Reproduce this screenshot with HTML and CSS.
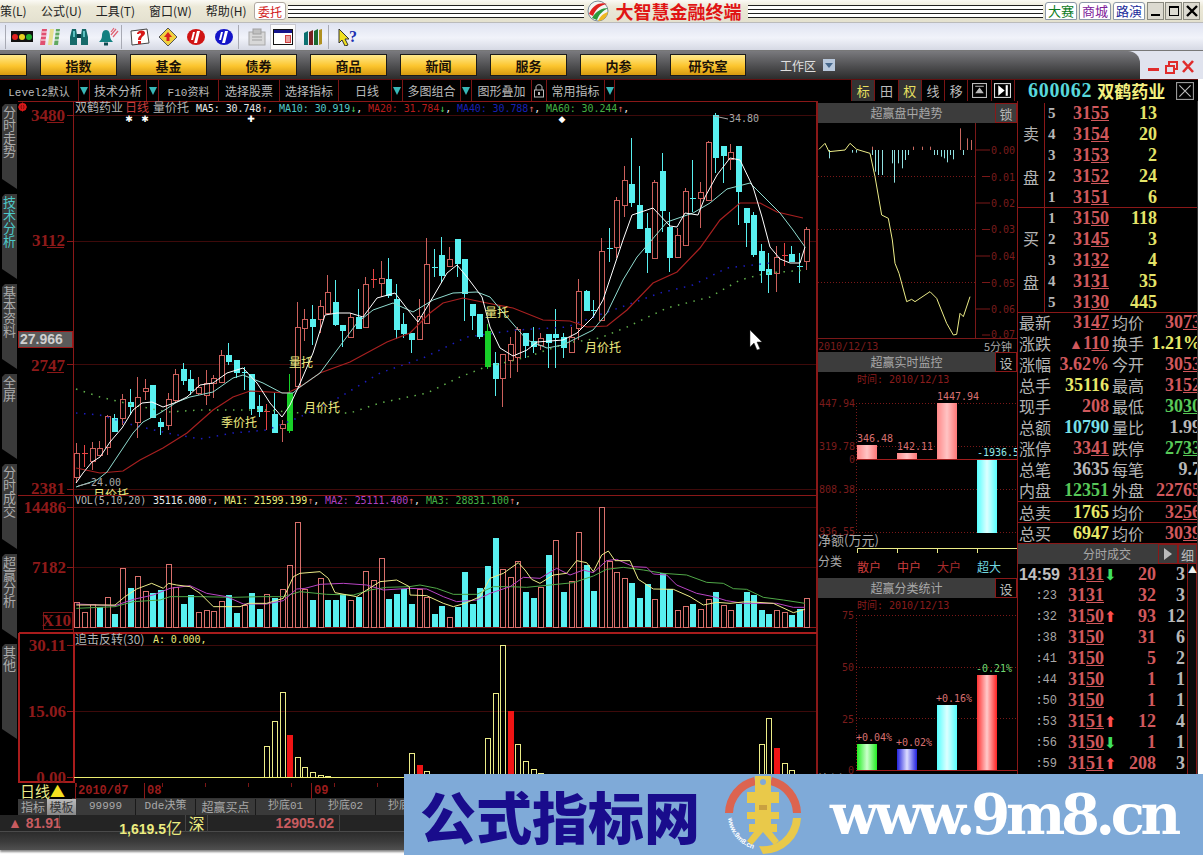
FILE: index.html
```html
<!DOCTYPE html>
<html lang="zh-CN">
<head>
    <meta charset="UTF-8">
    <title>大智慧金融终端</title>
    <link rel="stylesheet" href="styles.css">
</head>
<body>
    <svg class="defs" width="0" height="0">
        <defs>
            <linearGradient id="gradRed"><stop offset="0" stop-color="#ff6f6f"/><stop offset=".5" stop-color="#ffd8d8"/><stop offset="1" stop-color="#f55"/></linearGradient>
            <linearGradient id="gradPink"><stop offset="0" stop-color="#f88"/><stop offset=".5" stop-color="#ffc4c4"/><stop offset="1" stop-color="#f77"/></linearGradient>
            <linearGradient id="gradDeep"><stop offset="0" stop-color="#f33"/><stop offset=".5" stop-color="#ffcaca"/><stop offset="1" stop-color="#f22"/></linearGradient>
            <linearGradient id="gradCyan"><stop offset="0" stop-color="#5ff"/><stop offset=".5" stop-color="#dff"/><stop offset="1" stop-color="#5ff"/></linearGradient>
            <linearGradient id="gradGreen"><stop offset="0" stop-color="#2e2"/><stop offset=".5" stop-color="#cfc"/><stop offset="1" stop-color="#2e2"/></linearGradient>
            <linearGradient id="gradBlue"><stop offset="0" stop-color="#22d"/><stop offset=".5" stop-color="#ddf"/><stop offset="1" stop-color="#22d"/></linearGradient>
            <clipPath id="mainClip"><rect x="74" y="102" width="742" height="393"/></clipPath>
        </defs>
    </svg>

    <div class="titlebar">
        <div class="menu">
            <span class="menu-first">策(L)</span>
            <span>公式(U)</span>
            <span>工具(T)</span>
            <span>窗口(W)</span>
            <span>帮助(H)</span>
        </div>
        <div class="entrust">委托</div>
        <div class="stripes"></div>
        <svg class="app-logo" viewBox="0 0 24 24" width="24" height="24">
            <circle cx="12" cy="12" r="10" fill="#f4f4f4" stroke="#7a8a98"/>
            <path d="M3 15C7 5 15 3 21 5C15 6 10 9 7 17Z" fill="#e02020"/>
            <path d="M6 19C10 12 16 9 22 9C17 12 13 15 11 21Z" fill="#2c9a3c"/>
            <path d="M12 22C14 17 18 14 22 13C21 18 17 22 12 22Z" fill="#f0b820"/>
        </svg>
        <div class="app-title">大智慧金融终端</div>
        <div class="stripes"></div>
        <div class="link-btn link-green">大赛</div>
        <div class="link-btn link-purple">商城</div>
        <div class="link-btn link-blue">路演</div>
        <div class="sys-btns">
            <span class="sys-btn"><svg viewBox="0 0 14 14" width="14" height="14"><rect x="2" y="10" width="9" height="2"/></svg></span>
            <span class="sys-btn"><svg viewBox="0 0 14 14" width="14" height="14"><path d="M2 2h10v10h-10zM3 4v7h8v-7z" fill-rule="evenodd"/></svg></span>
            <span class="sys-btn"><svg viewBox="0 0 14 14" width="14" height="14"><path d="M2 2l10 10M12 2l-10 10" stroke="#000" stroke-width="2.4"/></svg></span>
        </div>
    </div>

    <div class="toolbar">
        <span class="tool-sep sep-a"></span>
        <svg class="tool ic-traffic" viewBox="0 0 22 14" width="22" height="14"><rect width="22" height="11" y="1" fill="#111"/><circle cx="4" cy="7" r="3" fill="#e02020"/><circle cx="11" cy="7" r="3" fill="#e8d020"/><circle cx="18" cy="7" r="3" fill="#20b030"/></svg>
        <svg class="tool ic-stripes" viewBox="0 0 22 18" width="22" height="18"><path d="M1 17l2-16h5l-2 16z" fill="#e05070"/><path d="M9 17l2-16h4l-2 16z" fill="#e8e090"/><path d="M15 17l2-16h4l-2 16z" fill="#60a860"/><path d="M3 4h5M2 8h5M2 12h5M16 4h5M16 8h5M15 12h5" stroke="#fff"/></svg>
        <svg class="tool ic-binoc" viewBox="0 0 20 20" width="20" height="20"><path d="M3 2h4l1 6v10h-7v-8zM17 2h-4l-1 6v10h7v-8z" fill="#156a6a"/><rect x="8" y="7" width="4" height="4" fill="#0c3c44"/><path d="M4 4h2v6h-2zM14 4h2v6h-2z" fill="#5cc0c0"/></svg>
        <svg class="tool ic-bell" viewBox="0 0 22 20" width="22" height="20"><path d="M9 3c3 0 4 3 4 6c0 3 2 5 3 6h-14c1-1 3-3 3-6c0-3 1-6 4-6z" fill="#128080"/><rect x="7" y="15.500" width="4" height="3" fill="#0c4a50"/><path d="M14 8l5-6M16 10l5-6M14 5l3-4" stroke="#e06070" stroke-width="1.200"/></svg>
        <span class="tool-sep sep-b"></span>
        <svg class="tool ic-help" viewBox="0 0 20 18" width="20" height="18"><path d="M1 3l16-2l2 14l-17 2z" fill="#fff" stroke="#444"/><path d="M7 6c0-4 8-5 8-1c0 3-4 3-4 7h-3c0-4 3-4 3-6c0-1-2-1-2 0z" fill="#d81818"/><rect x="8" y="13" width="3" height="3" fill="#d81818"/></svg>
        <svg class="tool ic-diamond" viewBox="0 0 20 20" width="20" height="20"><path d="M10 1l9 9l-9 9l-9-9z" fill="#f0d040" stroke="#555"/><path d="M10 5l4 5h-2.500v4h-3v-4h-2.500z" fill="#d82020"/></svg>
        <svg class="tool ic-round" viewBox="0 0 20 18" width="20" height="18"><ellipse cx="10" cy="9" rx="9" ry="8" fill="#d01414"/><path d="M8 15l3-12h3l-3 12zM5 12l2-8h2l-2 8z" fill="#fff"/></svg>
        <svg class="tool ic-round" viewBox="0 0 20 18" width="20" height="18"><ellipse cx="10" cy="9" rx="9" ry="8" fill="#1414c8"/><path d="M8 15l3-12h3l-3 12zM5 12l2-8h2l-2 8z" fill="#fff"/></svg>
        <span class="tool-sep sep-c"></span>
        <svg class="tool ic-clip" viewBox="0 0 18 18" width="18" height="18"><rect x="1" y="4" width="16" height="13" fill="#d8d8d8" stroke="#a8a8a8"/><rect x="5" y="1" width="8" height="5" fill="#c0c0c0" stroke="#a0a0a0"/><path d="M4 9h10M4 12h10" stroke="#a0a0a0"/></svg>
        <span class="tool-pressed"><svg viewBox="0 0 20 16" width="20" height="16"><rect x=".5" y=".5" width="19" height="15" fill="#fff" stroke="#111"/><rect x="1" y="1" width="18" height="3" fill="#14148c"/><rect x="12" y="6" width="6" height="8" fill="#d04040"/><path d="M13 8h4M13 10h4M13 12h4" stroke="#fff"/></svg></span>
        <svg class="tool ic-books" viewBox="0 0 20 18" width="20" height="18"><path d="M1 5l4-2v14h-4z" fill="#0c7070"/><path d="M6 4l4-2v15h-4z" fill="#7a2020"/><path d="M11 3l4-2v16h-4z" fill="#1a6a30"/><path d="M16 2l3-1v15l-3 1z" fill="#b09020"/></svg>
        <span class="tool-sep sep-d"></span>
        <span class="help-arrow"><svg viewBox="0 0 12 18" width="12" height="18"><path d="M1 1l10 10h-4l3 6l-3 1l-3-6l-3 3z" fill="#f0e020" stroke="#333"/></svg><span class="help-mark">?</span></span>
    </div>

    <div class="navwrap">
        <div class="navbar">
            <span class="nav-btn nav-cut"></span>
            <span class="nav-btn">指数</span>
            <span class="nav-btn">基金</span>
            <span class="nav-btn">债券</span>
            <span class="nav-btn">商品</span>
            <span class="nav-btn">新闻</span>
            <span class="nav-btn">服务</span>
            <span class="nav-btn">内参</span>
            <span class="nav-btn">研究室</span>
            <span class="workspace-label">工作区</span>
            <svg class="workspace-icon" viewBox="0 0 12 12" width="12" height="12"><rect width="12" height="12" fill="#b8c8dc"/><path d="M2 4l4 5l4-5z" fill="#47688c"/></svg>
        </div>
        <div class="mdi-btns">
            <svg viewBox="0 0 46 16" width="46" height="16"><rect x="0" y="9" width="11" height="3" fill="#e02c2c"/><path d="M18 7h8v7h-8zM21 7v-4h8v7h-3" fill="none" stroke="#e02c2c" stroke-width="2"/><path d="M35 2l10 11M45 2l-10 11" stroke="#e02c2c" stroke-width="2.600"/></svg>
        </div>
    </div>

    <div class="tabrow">
        <div class="tabs-left">
            <span class="tab tab-mono">Level2默认</span>
            <span class="tab tab-arrow"></span>
            <span class="tab">技术分析</span>
            <span class="tab tab-arrow"></span>
            <span class="tab tab-mono">F10资料</span>
            <span class="tab">选择股票</span>
            <span class="tab">选择指标</span>
            <span class="tab tab-wide">日线</span>
            <span class="tab tab-arrow"></span>
            <span class="tab">多图组合</span>
            <span class="tab tab-arrow"></span>
            <span class="tab">图形叠加</span>
            <span class="tab tab-lock"><svg viewBox="0 0 10 14" width="10" height="14"><path d="M2 6v-3c0-3 6-3 6 0v3" fill="none" stroke="#bbb"/><rect x=".5" y="6" width="9" height="7" fill="none" stroke="#bbb"/><rect x="4" y="8" width="2" height="3" fill="#bbb"/></svg></span>
            <span class="tab">常用指标</span>
            <span class="tab tab-arrow"></span>
        </div>
        <div class="tabs-fill"></div>
        <div class="tool-tabs">
            <span class="tool-tab tool-tab-on">标</span>
            <span class="tool-tab">田</span>
            <span class="tool-tab tool-tab-on">权</span>
            <span class="tool-tab">线</span>
            <span class="tool-tab">移</span>
            <span class="tool-tab"><svg viewBox="0 0 14 14" width="15" height="15"><rect x=".5" y=".5" width="13" height="13" fill="none" stroke="#bbb"/><path d="M3 3h8M7 5l3 4h-6z" stroke="#bbb" fill="#bbb"/></svg></span>
            <span class="tool-tab"><svg viewBox="0 0 16 14" width="17" height="15"><rect x=".5" y=".5" width="15" height="13" fill="none" stroke="#ddd"/><path d="M4 2l6 5l-6 5z" fill="#fff"/><rect x="11" y="2" width="2" height="10" fill="#fff"/></svg></span>
        </div>
        <div class="stock-head">
            <span class="stock-code">600062</span>
            <span class="stock-name">双鹤药业</span>
            <span class="stock-close"><svg viewBox="0 0 16 16" width="18" height="18"><rect x=".5" y=".5" width="15" height="15" fill="none" stroke="#999"/><path d="M3 3l10 10M13 3l-10 10" stroke="#bbb"/></svg></span>
        </div>
    </div>

    <div class="workspace">
        <div class="rail">
            <div class="rail-tab">分时走势</div>
            <div class="rail-tab rail-tab-on">技术分析</div>
            <div class="rail-tab">基本资料</div>
            <div class="rail-tab">全屏</div>
            <div class="rail-tab">分时成交</div>
            <div class="rail-tab">超赢分析</div>
            <div class="rail-tab rail-tab-last">其他</div>
        </div>

        <div class="chart-col">
            <svg class="kline" viewBox="18 101 799 682" width="799" height="682">
                <g class="grid">
                    <path d="M73 115.500H817M73 241.500H817M73 364.500H817M73 489.500H817M73 507.500H817M73 567.500H817M73 645.500H817M73 711.500H817"/>
                </g>
                <g class="frame">
                    <path d="M18 101.500H817M816.500 101V783M73.500 101V632M18 495.500H817M73 627.500H817M18 783.500H817"/>
                    <path class="frame-thick" d="M19 633H817M19 633V782H74V633"/>
                </g>
                <g class="ticks">
                    <path d="M67 115.500h6M67 241.500h6M67 364.500h6M67 489.500h6M67 507.500h6M67 567.500h6M67 645.500h6M67 711.500h6M67 777.500h6"/>
                    <path d="M47 122.500h17M47 247.500h17M47 372.500h17"/>
                </g>
                <g class="gear"><circle cx="22.500" cy="107" r="3"/><path d="M22.500 102.500v9M18 107h9M19.500 104l6 6M25.500 104l-6 6"/></g>

                <text class="axis-num" x="65" y="121">3480</text>
                <text class="axis-num" x="65" y="246">3112</text>
                <text class="axis-num" x="65" y="371">2747</text>
                <text class="axis-num" x="65" y="494">2381</text>
                <rect class="price-box" x="18.500" y="331.500" width="54" height="16"/>
                <text class="price-box-text" x="20" y="344">27.966</text>

                <g id="candles"></g>
                <g id="ma-lines"></g>

                <g class="legend">
                    <text class="cn-label" x="75" y="112">双鹤药业</text>
                    <text class="cn-label cn-red" x="125" y="112">日线</text>
                    <text class="cn-label" x="153" y="112">量价托</text>
                    <text class="mono-line" x="196" y="112"><tspan class="c-white">MA5: 30.748</tspan><tspan class="c-up">↑</tspan><tspan class="c-white">, </tspan><tspan class="c-cyan">MA10: 30.919</tspan><tspan class="c-down">↓</tspan><tspan class="c-white">, </tspan><tspan class="c-red">MA20: 31.784</tspan><tspan class="c-down">↓</tspan><tspan class="c-white">, </tspan><tspan class="c-blue">MA40: 30.788</tspan><tspan class="c-up">↑</tspan><tspan class="c-white">, </tspan><tspan class="c-green">MA60: 30.244</tspan><tspan class="c-up">↑</tspan><tspan class="c-white">,</tspan></text>
                    <text class="mark" x="129" y="122">✱</text>
                    <text class="mark" x="145" y="122">✱</text>
                    <text class="mark" x="251" y="122">✚</text>
                    <text class="mark" x="562" y="122">◆</text>
                </g>

                <g class="notes" clip-path="url(#mainClip)">
                    <text x="91" y="486" class="note-grey">24.00</text>
                    <text x="93" y="499">月价托</text>
                    <text x="221" y="427">季价托</text>
                    <text x="289" y="367">量托</text>
                    <text x="304" y="412">月价托</text>
                    <text x="485" y="317">量托</text>
                    <text x="585" y="352">月价托</text>
                    <text x="729" y="122" class="note-grey">34.80</text>
                    <path class="note-line" d="M714 116l14 3M78 486l12-3"/>
                </g>
                <path class="mouse" d="M750 330v17l4-4l3 7l3-1l-3-7h5z"/>

                <g class="legend">
                    <text class="mono-line c-grey" x="75" y="504">VOL(5,10,20)</text>
                    <text class="mono-line" x="153" y="504"><tspan class="c-white">35116.000</tspan><tspan class="c-up">↑</tspan><tspan class="c-white">, </tspan><tspan class="c-yellow">MA1: 21599.199</tspan><tspan class="c-up">↑</tspan><tspan class="c-white">, </tspan><tspan class="c-purple">MA2: 25111.400</tspan><tspan class="c-up">↑</tspan><tspan class="c-white">, </tspan><tspan class="c-green">MA3: 28831.100</tspan><tspan class="c-up">↑</tspan><tspan class="c-white">,</tspan></text>
                    <text class="cn-label" x="75" y="644">追击反转(30)</text>
                    <text class="mono-line c-yellow" x="153" y="643">A: 0.000,</text>
                </g>
                <text class="axis-num" x="66" y="513">14486</text>
                <text class="axis-num" x="66" y="573">7182</text>
                <rect class="x10-box" x="43.500" y="612.500" width="29" height="17"/>
                <text class="axis-num" x="71" y="626">X10</text>
                <text class="axis-num" x="66" y="651">30.11</text>
                <text class="axis-num" x="66" y="717">15.06</text>
                <text class="axis-num" x="66" y="783">0.00</text>

                <g id="volume"></g>
                <g id="signal"></g>
            </svg>

            <div class="time-axis">
                <span class="period">日线<span class="period-mark">▲</span></span>
                <span class="time-mark time-first">2010/07</span>
                <span class="time-mark time-second">08</span>
                <span class="time-mark time-third">09</span>
            </div>

            <div class="bottom-tabs">
                <span class="btm-tab btm-plain">指标</span>
                <span class="btm-tab btm-on">模板</span>
                <span class="btm-tab btm-num">99999</span>
                <span class="btm-tab btm-num">Dde决策</span>
                <span class="btm-tab btm-buy">超赢买点</span>
                <span class="btm-tab btm-num">抄底01</span>
                <span class="btm-tab btm-num">抄底02</span>
                <span class="btm-tab btm-num">抄底03</span>
            </div>
        </div>

        <div class="side">
            <div class="panel-title"><span class="panel-name">超赢盘中趋势</span><span class="panel-btn panel-btn-flat">锁</span></div>
            <svg class="trend" viewBox="818 123 199 229" width="199" height="229">
                <path class="dot-line" d="M818 176.500H975M818 229.500H975M818 282.500H975"/>
                <path class="axis-line" d="M975.500 123V339M818 338.500H1017"/>
                <path class="ticks-red" d="M976 150h14M982 176.500h8M976 203h14M982 229.500h8M976 256h14M982 282.500h8M976 309h14M982 335h8"/>
                <g id="trend-bars"></g>
                <polyline id="trend-line" class="line-yellow"/>
                <g class="trend-nums">
                    <text x="991" y="154">0.00</text>
                    <text x="991" y="181">0.01</text>
                    <text x="991" y="207">0.02</text>
                    <text x="991" y="233">0.03</text>
                    <text x="991" y="260">0.04</text>
                    <text x="991" y="287">0.05</text>
                    <text x="991" y="313">0.06</text>
                    <text x="991" y="338">0.07</text>
                </g>
                <text class="foot-date" x="818" y="350">2010/12/13</text>
                <text class="foot-period" x="984" y="351">5分钟</text>
            </svg>

            <div class="panel-title"><span class="panel-name">超赢实时监控</span><span class="panel-btn">设</span></div>
            <svg class="monitor" viewBox="818 372 199 206" width="199" height="206">
                <text class="panel-time" x="857" y="383">时间: 2010/12/13</text>
                <path class="dot-line" d="M856 403.500H1017M856 446.500H1017M856 489.500H1017M856 532.500H1017M856.500 403V532"/>
                <g class="bar-axis">
                    <text x="855" y="407">447.94</text>
                    <text x="855" y="450">319.78</text>
                    <text x="855" y="463">0</text>
                    <text x="855" y="493">808.38</text>
                    <text x="855" y="535">936.55</text>
                </g>
                <rect x="857" y="445" width="20" height="14" fill="url(#gradPink)"/>
                <rect x="897" y="453" width="20" height="6" fill="url(#gradPink)"/>
                <rect x="937" y="403" width="20" height="56" fill="url(#gradPink)"/>
                <rect x="977" y="460" width="20" height="73" fill="url(#gradCyan)"/>
                <path class="zero-line" d="M856 459.500H1017"/>
                <g class="bar-vals">
                    <text x="857" y="442">346.48</text>
                    <text x="897" y="450">142.11</text>
                    <text x="937" y="400">1447.94</text>
                    <text class="val-cyan" x="977" y="456">-1936.5</text>
                </g>
                <text class="panel-cn" x="818" y="545">净额(万元)</text>
                <path class="axis-yellow" d="M857.500 553V548.500H1017M897.500 553V548M937.500 553V548M977.500 553V548"/>
                <text class="panel-cn panel-cn-small" x="818" y="566">分类</text>
                <text class="class-red" x="857" y="572">散户</text>
                <text class="class-red" x="897" y="572">中户</text>
                <text class="class-dark" x="937" y="572">大户</text>
                <text class="class-cyan" x="977" y="572">超大</text>
            </svg>

            <div class="panel-title"><span class="panel-name">超赢分类统计</span><span class="panel-btn">设</span></div>
            <svg class="stats-chart" viewBox="818 598 199 217" width="199" height="217">
                <text class="panel-time" x="857" y="609">时间: 2010/12/13</text>
                <path class="dot-line" d="M856 615.500H1017M856 667.500H1017M856 718.500H1017M856.500 615V770"/>
                <g class="bar-axis">
                    <text x="854" y="619">75</text>
                    <text x="854" y="671">50</text>
                    <text x="854" y="723">25</text>
                    <text x="854" y="774">0</text>
                </g>
                <rect x="857" y="744" width="20" height="26" fill="url(#gradGreen)"/>
                <rect x="897" y="749" width="20" height="21" fill="url(#gradBlue)"/>
                <rect x="937" y="705" width="20" height="65" fill="url(#gradCyan)"/>
                <rect x="977" y="675" width="20" height="95" fill="url(#gradDeep)"/>
                <path class="zero-line" d="M856 770.500H1017"/>
                <g class="bar-vals">
                    <text x="856" y="741">+0.04%</text>
                    <text x="896" y="746">+0.02%</text>
                    <text x="936" y="702">+0.16%</text>
                    <text class="val-green" x="976" y="672">-0.21%</text>
                </g>
                <text class="panel-cn panel-cn-small" x="818" y="784">比例</text>
            </svg>
        </div>

        <div class="quote">
            <div class="book">
                <div class="book-side"><span>卖</span><span>盘</span></div>
                <div class="levels">
                    <div class="level"><span class="lv">5</span><span class="px">31<u>55</u></span><span class="qty">13</span></div>
                    <div class="level"><span class="lv">4</span><span class="px">31<u>54</u></span><span class="qty">20</span></div>
                    <div class="level"><span class="lv">3</span><span class="px">31<u>53</u></span><span class="qty">2</span></div>
                    <div class="level"><span class="lv">2</span><span class="px">31<u>52</u></span><span class="qty">24</span></div>
                    <div class="level"><span class="lv">1</span><span class="px">31<u>51</u></span><span class="qty">6</span></div>
                </div>
            </div>
            <div class="book">
                <div class="book-side"><span>买</span><span>盘</span></div>
                <div class="levels">
                    <div class="level"><span class="lv">1</span><span class="px">31<u>50</u></span><span class="qty">118</span></div>
                    <div class="level"><span class="lv">2</span><span class="px">31<u>45</u></span><span class="qty">3</span></div>
                    <div class="level"><span class="lv">3</span><span class="px">31<u>32</u></span><span class="qty">4</span></div>
                    <div class="level"><span class="lv">4</span><span class="px">31<u>31</u></span><span class="qty">35</span></div>
                    <div class="level"><span class="lv">5</span><span class="px">31<u>30</u></span><span class="qty">445</span></div>
                </div>
            </div>

            <div class="stats">
                <div class="stat"><span>最新</span><b class="red">31<u>47</u></b><span>均价</span><b class="red">30<u>73</u></b></div>
                <div class="stat"><span>涨跌</span><b class="red"><i class="tri">▲</i>1<u>10</u></b><span>换手</span><b class="yellow">1.21%</b></div>
                <div class="stat"><span>涨幅</span><b class="red">3.62%</b><span>今开</span><b class="red">30<u>53</u></b></div>
                <div class="stat"><span>总手</span><b class="yellow">35116</b><span>最高</span><b class="red">31<u>52</u></b></div>
                <div class="stat"><span>现手</span><b class="red">208</b><span>最低</span><b class="green">30<u>30</u></b></div>
                <div class="stat"><span>总额</span><b class="cyan">10790</b><span>量比</span><b class="grey">1.99</b></div>
                <div class="stat"><span>涨停</span><b class="red">33<u>41</u></b><span>跌停</span><b class="green">27<u>33</u></b></div>
                <div class="stat"><span>总笔</span><b class="grey">3635</b><span>每笔</span><b class="grey">9.7</b></div>
                <div class="stat"><span>内盘</span><b class="green">12351</b><span>外盘</span><b class="red">22765</b></div>
                <div class="stat stat-line"><span>总卖</span><b class="yellow">1765</b><span>均价</span><b class="red">32<u>56</u></b></div>
                <div class="stat stat-line"><span>总买</span><b class="yellow">6947</b><span>均价</span><b class="red">30<u>39</u></b></div>
            </div>

            <div class="panel-title trades-title"><span class="panel-name">分时成交</span><span class="panel-btn panel-play"><svg viewBox="0 0 10 12" width="10" height="12"><path d="M1 0l8 6l-8 6z" fill="#bbb"/></svg></span><span class="panel-btn panel-detail">细</span></div>
            <div class="trades-wrap">
                <div class="trades">
                    <div class="trade"><span class="t-first">14:59</span><b>31<u>31</u></b><i class="flag-down">⬇</i><b class="t-vol">20</b><b class="t-cnt">3</b></div>
                    <div class="trade"><span class="t-time">:23</span><b>31<u>31</u></b><i></i><b class="t-vol">32</b><b class="t-cnt">3</b></div>
                    <div class="trade"><span class="t-time">:32</span><b>31<u>50</u></b><i class="flag-up">⬆</i><b class="t-vol">93</b><b class="t-cnt">12</b></div>
                    <div class="trade"><span class="t-time">:38</span><b>31<u>50</u></b><i></i><b class="t-vol">31</b><b class="t-cnt">6</b></div>
                    <div class="trade"><span class="t-time">:41</span><b>31<u>50</u></b><i></i><b class="t-vol">5</b><b class="t-cnt">2</b></div>
                    <div class="trade"><span class="t-time">:44</span><b>31<u>50</u></b><i></i><b class="t-vol">1</b><b class="t-cnt">1</b></div>
                    <div class="trade"><span class="t-time">:50</span><b>31<u>50</u></b><i></i><b class="t-vol">1</b><b class="t-cnt">1</b></div>
                    <div class="trade"><span class="t-time">:53</span><b>31<u>51</u></b><i class="flag-up">⬆</i><b class="t-vol">12</b><b class="t-cnt">4</b></div>
                    <div class="trade"><span class="t-time">:56</span><b>31<u>50</u></b><i class="flag-down">⬇</i><b class="t-vol">1</b><b class="t-cnt">1</b></div>
                    <div class="trade"><span class="t-time">:59</span><b>31<u>51</u></b><i class="flag-up">⬆</i><b class="t-vol">208</b><b class="t-cnt">3</b></div>
                </div>
                <div class="scroll"><span class="scroll-up">▲</span></div>
            </div>
        </div>
    </div>

    <div class="status">
        <span class="st st-index"><i class="tri">▲</i> 81.91</span>
        <span class="st st-amount">1,619.5<small>亿</small></span>
        <span class="st st-market">深</span>
        <span class="st st-sz">12905.02</span>
    </div>
    <div class="footer"></div>

    <div class="watermark">
        <span class="wm-name">公式指标网</span>
        <svg class="wm-logo" viewBox="0 0 80 81" width="80" height="81">
            <path d="M2 39A38 38 0 0 1 31 3L33 11A30 30 0 0 0 10 39Z" fill="#dc6450"/>
            <path d="M78 39A38 38 0 0 0 49 3L47 11A30 30 0 0 1 70 39Z" fill="#dc6450"/>
            <path d="M78 44A38 38 0 0 1 40 80L36 72A30 30 0 0 0 70 44Z" fill="#e9c94a"/>
            <path d="M32 2h16v16h8v11h-8v9h8v7h-8v5h6v8h-5l7 9l-5 4l-11-13l-11 13l-5-4l7-9h-5v-8h6v-5h-8v-7h8v-9h-8v-11h8z" fill="#e9c94a"/>
            <circle cx="40" cy="8" r="3" fill="#7fa9d8"/>
            <path d="M36 31h8v5h-8z" fill="#c9a040"/>
            <path id="wmArc" d="M5 44A35 35 0 0 0 37 76" fill="none"/>
            <text class="wm-arc"><textPath href="#wmArc">www.9m8.cn</textPath></text>
        </svg>
        <span class="wm-url">www.9m8.cn</span>
    </div>

    <script src="charts.js"></script>
</body>
</html>
```

FILE: styles.css
```css
/* Basic layout */
* {
    box-sizing: border-box;
}
html, body {
    margin: 0;
    padding: 0;
}
body {
    position: relative;
    width: 1203px;
    height: 855px;
    overflow: hidden;
    background: #fff;
    font-family: "Noto Sans CJK SC", sans-serif;
    font-size: 12px;
}
.defs {
    position: absolute;
}

/* Title bar */
.titlebar {
    height: 23px;
    display: flex;
    align-items: center;
    background: linear-gradient(#fbfaf5, #ece9d8 30%, #e4e1cf);
    border-bottom: 1px solid #bbb;
    color: #222;
    padding-right: 3px;
}
.menu {
    display: flex;
    gap: 14px;
    width: 254px;
    flex: none;
    line-height: 16px;
}
.menu-first {
    width: 27px;
    white-space: nowrap;
    overflow: hidden;
}
.entrust {
    width: 32px;
    height: 18px;
    flex: none;
    text-align: center;
    line-height: 17px;
    color: #d01818;
    background: #fff;
    border: 1px solid #b0a8a0;
    border-radius: 3px;
}
.stripes {
    flex: 1;
    height: 13px;
    margin: 0 2px;
    background: repeating-linear-gradient(#222 0, #222 1px, #fff 1px, #fff 4px);
}
.app-logo {
    flex: none;
}
.app-title {
    flex: none;
    width: 130px;
    margin-left: 6px;
    color: #e01414;
    font-size: 18px;
    line-height: 22px;
    font-weight: 700;
    white-space: nowrap;
}
.link-btn {
    flex: none;
    width: 32px;
    height: 18px;
    margin-right: 2px;
    background: #fff;
    border: 1px solid #8c98a8;
    border-radius: 3px 3px 0 0;
    text-align: center;
    font-size: 13px;
    line-height: 16px;
}
.link-green { color: #0a7a20; }
.link-purple { color: #80209a; }
.link-blue { color: #1a2a9a; }
.sys-btns {
    display: flex;
    flex: none;
    gap: 1px;
}
.sys-btn {
    width: 17px;
    height: 18px;
    background: #dcdad0;
    border: 1px solid #8a8a80;
    display: flex;
    align-items: center;
    justify-content: center;
}

/* Toolbar */
.toolbar {
    height: 28px;
    display: flex;
    align-items: center;
    background: linear-gradient(#dfe3f1, #f1f3fa 55%, #d6d9e4);
    border-bottom: 1px solid #777;
}
.tool {
    flex: none;
}
.tool-sep {
    width: 1px;
    height: 24px;
    flex: none;
    background: #a8aab4;
}
.sep-a { margin-left: 5px; }
.sep-b { margin-left: 2px; }
.sep-c { margin-left: 4px; }
.sep-d { margin-left: 5px; }
.ic-traffic { margin-left: 5px; }
.ic-stripes { margin-left: 6px; }
.ic-binoc { margin-left: 8px; }
.ic-bell { margin-left: 8px; }
.ic-help { margin-left: 8px; }
.ic-diamond { margin-left: 8px; }
.ic-round { margin-left: 8px; }
.ic-clip { margin-left: 9px; }
.ic-books { margin-left: 7px; }
.tool-pressed {
    width: 26px;
    height: 26px;
    flex: none;
    margin-left: 4px;
    background: #fafafa;
    border: 1px solid #c8c8d0;
    display: flex;
    align-items: center;
    justify-content: center;
}
.help-arrow {
    display: flex;
    align-items: center;
    margin-left: 9px;
}
.help-mark {
    font: bold 16px "Liberation Serif", serif;
    color: #2030b0;
    margin-left: -1px;
}

/* Yellow nav buttons */
.navwrap {
    height: 28px;
    display: flex;
    background: #e0e3ee;
}
.navbar {
    width: 1140px;
    flex: none;
    display: flex;
    align-items: center;
    gap: 13px;
    background: linear-gradient(#7a7a7e, #4e4e50 55%, #2c2c2c);
    border-top-right-radius: 12px;
}
.nav-btn {
    width: 77px;
    height: 22px;
    flex: none;
    text-align: center;
    line-height: 21px;
    font-size: 13px;
    font-weight: 700;
    color: #1a1208;
    background: linear-gradient(#ffe98c, #fcc52e 55%, #d79a10);
    border: 1px solid #1a1a1a;
}
.nav-cut {
    width: 27px;
    border-left: 0;
}
.nav-btn:nth-child(9) {
    width: 76px;
}
.workspace-label {
    margin-left: 21px;
    color: #e0e0e0;
    font-size: 12px;
}
.workspace-icon {
    margin-left: -6px;
}
.mdi-btns {
    flex: 1;
    display: flex;
    align-items: flex-end;
    padding: 0 0 4px 8px;
}

/* Tab row */
.tabrow {
    width: 1198px;
    height: 22px;
    display: flex;
    background: #000;
    border-top: 1px solid #601010;
    color: #bbb;
}
.tabs-left {
    display: grid;
    grid-template-columns: 79px 11px 57px 12px 60px 61px 59px 53px 11px 58px 11px 60px 15px 58px 10px;
    flex: none;
}
.tab {
    display: flex;
    align-items: center;
    justify-content: center;
    border-right: 1px solid #7a1414;
    white-space: nowrap;
    overflow: hidden;
}
.tab-mono {
    font-family: "Liberation Mono", "Noto Sans CJK SC", monospace;
    font-size: 11px;
}
.tab-wide {
    justify-content: flex-end;
    padding-right: 12px;
}
.tab-arrow::after {
    content: "";
    border-left: 4px solid transparent;
    border-right: 4px solid transparent;
    border-top: 8px solid #38b8b8;
}
.tabs-fill {
    flex: 1;
}
.tool-tabs {
    display: flex;
    width: 164px;
    flex: none;
    border-left: 1px solid #7a1414;
}
.tool-tab {
    flex: 1;
    display: flex;
    align-items: center;
    justify-content: center;
    border-right: 1px solid #7a1414;
    font-size: 13px;
}
.tool-tab-on {
    background: #333;
    color: #e8e060;
}
.stock-head {
    width: 183px;
    flex: none;
    display: flex;
    align-items: center;
    padding-left: 13px;
    font-weight: 700;
}
.stock-code {
    color: #58d8dc;
    font: bold 20px "Liberation Serif", serif;
    letter-spacing: .7px;
}
.stock-name {
    margin-left: 5px;
    color: #f4f080;
    font-size: 17px;
    line-height: 20px;
}
.stock-close {
    margin-left: 11px;
    display: flex;
}

/* Workspace */
.workspace {
    width: 1198px;
    height: 714px;
    display: flex;
    background: #000;
}
.rail {
    width: 18px;
    flex: none;
    padding: 3px 1px 0 2px;
    display: flex;
    flex-direction: column;
    gap: 5px;
}
.rail-tab {
    height: 85px;
    flex: none;
    padding-top: 2px;
    background: #3a3a3a;
    color: #aaa;
    font-size: 13px;
    line-height: 15px;
    writing-mode: vertical-rl;
    text-orientation: upright;
    clip-path: polygon(0 3px, 3px 0, 100% 0, 100% 100%, 0 calc(100% - 10px));
}
.rail-tab-on {
    color: #4cc8c8;
}
.rail-tab-last {
    height: 95px;
}
.chart-col {
    width: 799px;
    flex: none;
    display: flex;
    flex-direction: column;
}
.kline {
    display: block;
    flex: none;
}
.grid path {
    stroke: #3e0a0a;
    fill: none;
}
.frame path {
    stroke: #8a1818;
    fill: none;
}
.frame .frame-thick {
    stroke: #a81c1c;
    stroke-width: 2;
}
.ticks path {
    stroke: #8a1818;
    fill: none;
}
.gear circle {
    fill: #000;
    stroke: #d81818;
    stroke-width: 2;
}
.gear path {
    stroke: #d81818;
    fill: none;
}
.axis-num {
    fill: #8e1a1a;
    font: bold 17px "Liberation Serif", serif;
    text-anchor: end;
}
.price-box {
    fill: #5a5a5a;
    stroke: #a01818;
}
.price-box-text {
    fill: #d0d0d0;
    font: bold 14px "Liberation Sans", sans-serif;
}
.x10-box {
    fill: none;
    stroke: #7a1616;
}
.cn-label {
    fill: #b4b4b4;
    font-size: 12px;
}
.cn-red {
    fill: #c83c3c;
}
.mono-line {
    font: 10px "DejaVu Sans Mono", monospace;
    letter-spacing: -.09px;
    white-space: pre;
}
.c-white { fill: #e8e8e8; }
.c-grey { fill: #b4b4b4; }
.c-cyan { fill: #54c8c8; }
.c-red { fill: #b81c1c; }
.c-blue { fill: #1820b4; }
.c-green { fill: #44b044; }
.c-yellow { fill: #e8e878; }
.c-purple { fill: #b040c0; }
.c-up { fill: #d86060; }
.c-down { fill: #50d060; }
.mark {
    fill: #fff;
    font: 9px "DejaVu Sans", sans-serif;
    text-anchor: middle;
}
.notes text {
    fill: #f0ec80;
    font-size: 12px;
}
.notes .note-grey {
    fill: #a8a8a8;
    font: 10px "DejaVu Sans Mono", monospace;
}
.note-line {
    stroke: #a8a8a8;
    fill: none;
}
.mouse {
    fill: #fff;
    stroke: #222;
    stroke-width: .5;
}

/* Candles and lines */
.cd {
    shape-rendering: crispEdges;
}
.cd-up {
    stroke: #cc605c;
    fill: #000;
}
.cd-dn {
    stroke: #58f0f0;
    fill: #58f0f0;
}
.cd-lim {
    stroke: #18d028;
    fill: #18d028;
}
.cd-flat {
    stroke: #e84444;
}
.line-white, .line-teal, .line-red, .line-yellow, .line-purple, .line-green {
    fill: none;
}
.line-white { stroke: #fff; }
.line-teal { stroke: #90dcd0; }
.line-red { stroke: #a82020; stroke-width: 1.200; }
.line-yellow { stroke: #ecec88; }
.line-purple { stroke: #b844c4; }
.line-green { stroke: #50a848; }
.dots-blue, .dots-green {
    fill: none;
    stroke-width: 1.500;
    stroke-dasharray: 1.500 6.500;
}
.dots-blue { stroke: #1c1cc0; }
.dots-green { stroke: #62b04c; }
.vol-up {
    stroke: #d8706c;
    fill: none;
    shape-rendering: crispEdges;
}
.vol-dn {
    fill: #58f0f0;
    shape-rendering: crispEdges;
}
.sig-bar {
    stroke: #ecec88;
    fill: none;
    shape-rendering: crispEdges;
}
.sig-red {
    fill: #f01414;
    shape-rendering: crispEdges;
}
.sig-base {
    stroke: #ecec70;
}

/* Under the chart */
.time-axis {
    height: 16px;
    display: flex;
    align-items: center;
    flex: none;
    font: bold 12px "Liberation Mono", monospace;
    color: #9a1c1c;
    background-image: repeating-linear-gradient(90deg, #7a1616 0, #7a1616 1px, transparent 1px, transparent 43px);
    background-position: 58px 0;
    background-size: 100% 4px;
    background-repeat: no-repeat;
    border-bottom: 1px solid #333;
}
.period {
    width: 54px;
    flex: none;
    padding-left: 2px;
    color: #ecec88;
    font: 15px/16px "Noto Sans CJK SC", sans-serif;
    white-space: nowrap;
    background: #000;
}
.period-mark {
    color: #f4e020;
    font-size: 15px;
}
.time-mark {
    flex: none;
    padding-left: 2px;
    border-left: 1px solid #8a1818;
    line-height: 16px;
}
.time-first { margin-left: 3px; width: 69px; }
.time-second { width: 167px; }
.time-third { width: 30px; }
.bottom-tabs {
    height: 16px;
    flex: none;
    display: flex;
    align-items: center;
    background: #3a3a3a;
    color: #a8a8a8;
    font-size: 12px;
}
.btm-tab {
    height: 16px;
    line-height: 15px;
    flex: none;
    text-align: center;
    border-right: 1px solid #1a1a1a;
    white-space: nowrap;
}
.btm-plain { width: 28px; margin-left: 1px; border: 0; }
.btm-on { width: 29px; background: linear-gradient(#bbb, #888); color: #333; border: 0; }
.btm-num { width: 60px; font-family: "Liberation Mono", "Noto Sans CJK SC", monospace; font-size: 11px; }
.btm-buy { width: 60px; }

/* Side panels */
.side {
    width: 200px;
    flex: none;
    padding-top: 2px;
    border-left: 1px solid #8a1818;
    overflow: hidden;
}
.side svg {
    display: block;
}
.panel-title {
    height: 20px;
    display: flex;
    background: #3c3c3c;
    color: #a8a8a8;
    font-size: 12px;
    line-height: 19px;
}
.panel-name {
    flex: 1;
    text-align: center;
}
.panel-btn {
    width: 22px;
    flex: none;
    display: flex;
    align-items: center;
    justify-content: center;
    background: #000;
    color: #bbb;
    font-size: 13px;
    border: 1px solid #8a1818;
}
.panel-btn-flat {
    background: #3c3c3c;
}
.panel-play {
    width: 20px;
    background: #3c3c3c;
}
.panel-detail {
    width: 19px;
    background: #3c3c3c;
}
.dot-line {
    stroke: #7a1818;
    stroke-dasharray: 1 2;
    fill: none;
}
.axis-line, .ticks-red {
    stroke: #7a1818;
    fill: none;
}
.trend-nums text {
    fill: #7a1c1c;
    font: 10px "DejaVu Sans Mono", monospace;
}
.foot-date {
    fill: #7a1c1c;
    font: 10px "DejaVu Sans Mono", monospace;
}
.foot-period {
    fill: #a8a8a8;
    font-size: 11px;
}
.panel-time {
    fill: #8a1c1c;
    font: 10px "DejaVu Sans Mono", "Noto Sans CJK SC", monospace;
}
.bar-axis text {
    fill: #7a1c1c;
    font: 10px "DejaVu Sans Mono", monospace;
    text-anchor: end;
}
.zero-line {
    stroke: #a01c1c;
}
.bar-vals text {
    fill: #d87070;
    font: 10px "DejaVu Sans Mono", monospace;
}
.bar-vals .val-cyan { fill: #90e8e8; }
.bar-vals .val-green { fill: #70d870; }
.panel-cn {
    fill: #a8a8a8;
    font-size: 13px;
}
.panel-cn-small {
    font-size: 12px;
}
.axis-yellow {
    stroke: #ecec88;
    fill: none;
}
.class-red, .class-dark, .class-cyan {
    font-size: 12px;
}
.class-red { fill: #c83c3c; }
.class-dark { fill: #a82c2c; }
.class-cyan { fill: #70d8e0; }

/* Quote column */
.quote {
    width: 181px;
    flex: none;
    padding-top: 2px;
    border-left: 1px solid #8a1818;
    border-right: 1px solid #333;
    overflow: hidden;
    color: #b4b4b4;
}
.book {
    display: flex;
    height: 105px;
    border-bottom: 1px solid #8a1818;
}
.book-side {
    width: 27px;
    flex: none;
    display: flex;
    flex-direction: column;
    align-items: center;
    justify-content: space-around;
    font-size: 16px;
    padding: 8px 0;
    border-right: 1px solid #8a1818;
}
.levels {
    flex: 1;
}
.level {
    height: 21px;
    display: grid;
    grid-template-columns: 28px 36px 48px;
    align-items: center;
    font: bold 18px/21px "Liberation Serif", serif;
}
.lv {
    padding-left: 3px;
    color: #b8b8b8;
    font-size: 15px;
}
.px {
    color: #d0585c;
}
.qty {
    text-align: right;
    color: #e4e468;
}
.stats {
    margin-top: -1px;
}
.stat {
    height: 21px;
    display: grid;
    grid-template-columns: 35px 55px 39px 53px;
    padding-left: 1px;
    font-size: 16px;
    line-height: 21px;
    white-space: nowrap;
}
.stat span:nth-of-type(2) {
    padding-left: 3px;
}
.stat b {
    text-align: right;
    font: bold 18px/21px "Liberation Serif", serif;
}
.stat b.red { color: #d0585c; }
.stat b.yellow { color: #e8e868; }
.stat b.green { color: #58c858; }
.stat b.cyan { color: #78e0e8; }
.stat b.grey { color: #b8b8b8; }
.tri {
    font-style: normal;
    font-size: 14px;
}
.stat-line {
    border-top: 1px solid #8a1818;
}
.trades-title {
    border-top: 1px solid #8a1818;
    height: 21px;
}
.trades-title .panel-name {
    padding-left: 38px;
}
.trades-wrap {
    display: flex;
    height: 230px;
}
.trades {
    flex: 1;
}
.trade {
    height: 21px;
    display: grid;
    grid-template-columns: 38px 11px 36px 14px 38px 29px;
    padding-left: 1px;
    align-items: center;
    font: bold 18px/21px "Liberation Serif", serif;
    color: #d0585c;
}
.trade b:nth-of-type(1) {
    grid-column: 3;
}
.trade i {
    grid-column: 4;
    font: 15px/18px "DejaVu Sans", sans-serif;
}
.flag-up { color: #ff5050; }
.flag-down { color: #40e060; }
.t-first {
    color: #c0c0c0;
    font: bold 16px "Liberation Sans", sans-serif;
    text-align: right;
    white-space: nowrap;
}
.t-time {
    color: #a8a8a8;
    font: 12px "Liberation Mono", monospace;
    text-align: right;
}
.t-vol {
    text-align: right;
}
.t-cnt {
    text-align: right;
    color: #b8b8b8;
}
.scroll {
    width: 10px;
    flex: none;
    border-left: 1px solid #8a1818;
    border-right: 1px solid #8a1818;
    background: #0a0a0a;
}
.scroll-up {
    display: block;
    color: #eee;
    font-size: 9px;
    line-height: 12px;
    text-align: center;
}

/* Status bar */
.status {
    height: 17px;
    display: flex;
    align-items: center;
    background: #242424;
    border-bottom: 1px solid #4a4a4a;
    font: bold 14px "Liberation Sans", sans-serif;
}
.st {
    height: 17px;
    line-height: 16px;
    flex: none;
    border-right: 1px solid #444;
    white-space: nowrap;
}
.st-index { width: 60px; padding-left: 8px; color: #c85c60; }
.st-amount { width: 126px; text-align: right; padding-right: 3px; color: #ecec80; }
.st-amount small { font: 16px "Noto Sans CJK SC", sans-serif; }
.st-market { width: 22px; color: #ecec80; font: 16px/16px "Noto Sans CJK SC", sans-serif; text-align: center; }
.st-sz { width: 132px; text-align: right; padding-right: 5px; color: #c85c60; }
.footer {
    height: 18px;
    background: linear-gradient(#2c2c2c, #3a3a3a 50%, #505050);
    box-shadow: 0 2px 2px #888;
}

/* Site banner over the lower right corner */
.watermark {
    position: absolute;
    left: 404px;
    top: 774px;
    width: 799px;
    height: 81px;
    display: flex;
    align-items: center;
    padding-left: 16px;
    background: #7faad8;
}
.wm-name {
    width: 283px;
    flex: none;
    color: #190c8c;
    font-size: 56px;
    font-weight: 900;
    line-height: 81px;
    white-space: nowrap;
}
.wm-logo {
    flex: none;
    margin-left: 20px;
}
.wm-arc {
    fill: #fff;
    font: bold 7px "Liberation Sans", sans-serif;
}
.wm-url {
    flex: none;
    margin-left: 27px;
    color: #fff;
    font: bold 56px/81px "DejaVu Serif", serif;
    letter-spacing: -4.300px;
    white-space: nowrap;
}
```

FILE: charts.js
```js
// All chart data is in page pixels, the svg viewBoxes match the page
const SVG_NS = 'http://www.w3.org/2000/svg';
const barX = i => 76.3 + 7.605 * i;

// type: u = up (hollow red), d = down (cyan), l = limit (green), f = flat red
// [type, bodyTop, bodyBottom, high, low]
const candles = [
    ['u',453,477,443,483],['f',453,453,445,467],['u',448,461,442,470],['u',448,455,441,455],
    ['u',416,447,415,455],['d',418,431,414,431],['u',399,418,394,425],['d',402,406,389,415],
    ['u',397,422,377,438],['u',388,391,379,400],['d',385,417,385,417],['d',422,426,418,435],
    ['u',399,425,393,430],['u',374,400,369,402],['d',369,380,363,385],['d',379,390,370,395],
    ['u',387,393,377,395],['u',383,395,370,405],['u',378,383,375,398],['u',355,382,350,383],
    ['d',355,361,343,365],['d',360,372,360,378],['d',372,372,367,390],['d',374,408,374,415],
    ['d',406,411,395,417],['f',411,411,404,430],['d',414,432,393,433],['u',424,428,420,442],
    ['l',393,430,374,433],['u',327,386,302,386],['u',319,328,309,341],['d',319,326,305,345],
    ['u',306,319,300,333],['u',292,313,275,313],['d',302,324,280,326],['d',325,330,325,347],
    ['u',317,337,313,337],['d',317,328,289,328],['u',284,327,277,327],['f',279,279,269,288],
    ['u',278,283,261,297],['d',279,295,258,298],['d',299,329,284,339],['d',324,333,313,338],
    ['d',333,339,333,353],['u',316,339,299,339],['u',264,323,238,323],['d',267,267,249,277],
    ['d',255,275,237,283],['u',259,266,247,266],['d',239,263,239,277],['d',259,293,259,321],
    ['d',304,315,304,330],['d',314,336,314,339],['l',331,366,324,369],['d',363,378,352,396],
    ['u',354,378,354,407],['u',344,360,337,378],['u',329,357,327,372],['d',333,345,333,358],
    ['d',341,346,327,353],['u',338,345,333,350],['d',334,342,334,368],['d',334,337,309,368],
    ['d',337,347,333,358],['u',337,352,327,352],['u',291,328,279,340],['d',291,310,290,310],
    ['d',310,310,300,318],['u',251,320,238,320],['d',248,248,228,262],['u',200,247,197,258],
    ['u',180,205,166,217],['d',184,202,138,207],['d',205,228,166,228],['d',228,252,213,273],
    ['u',182,258,180,258],['d',171,210,153,232],['d',227,257,212,272],['u',235,257,228,257],
    ['u',191,245,188,245],['d',198,198,160,212],['u',192,198,182,228],['u',142,200,141,200],
    ['d',115,157,113,173],['d',146,155,146,183],['u',152,159,144,170],['d',146,191,146,225],
    ['d',208,222,208,247],['d',215,254,212,257],['d',251,270,244,283],['d',269,274,253,293],
    ['u',257,273,246,292],['f',255,255,243,266],['d',254,261,246,261],['d',266,266,253,283],
    ['u',229,261,227,270]
];

const maLines = {
    'dots-green': [76,389,100,397,133,405,167,412,200,410,233,410,267,410,300,413,350,413,380,403,427,393,460,377,483,368,527,357,567,343,600,338,627,327,667,308,710,297,740,280,767,273,807,270],
    'dots-blue': [76,413,100,415,133,425,167,433,200,439,233,433,267,430,300,417,340,397,380,373,423,358,467,337,517,330,567,327,593,317,627,305,660,293,693,285,727,268,770,263],
    'line-red': [76,468,100,473,123,471,140,460,163,448,187,433,213,410,233,397,250,391,287,393,300,387,320,373,350,362,387,342,410,333,430,313,443,303,463,298,487,303,513,308,543,320,570,321,587,327,607,326,627,310,653,283,677,272,700,248,720,220,740,203,760,203,777,212,803,218],
    'line-teal': [76,487,97,480,107,472,117,457,133,433,143,422,160,413,177,402,190,397,213,392,233,378,243,375,263,383,282,393,293,393,300,387,320,373,337,350,357,323,373,310,393,303,413,312,433,300,453,293,477,292,490,297,507,317,527,340,547,348,563,345,593,330,607,313,623,280,637,257,650,242,667,222,693,213,710,203,727,189,750,183,767,200,780,213,793,230,805,247],
    'line-white': [76,483,83,473,92,462,100,457,110,442,122,428,133,410,142,403,152,402,163,407,177,402,187,397,200,385,213,383,227,373,243,368,257,383,270,403,282,417,290,405,298,388,313,353,325,315,337,313,350,313,363,317,377,298,395,293,408,310,418,322,433,297,447,273,457,265,467,277,482,297,490,327,500,348,513,356,527,350,537,342,563,340,577,333,593,317,603,300,613,270,623,240,632,215,653,208,670,226,677,227,685,213,698,215,705,197,717,175,730,158,740,160,753,187,762,217,770,247,780,259,790,263,800,263,805,247]
};

// volume bar tops, read off a 3x crop starting at y=490. negative = cyan bar
const volTops = [
    335,367,343,-352,322,-372,235,-295,258,304,-310,-300,223,290,-342,-316,367,361,363,334,
    -316,-369,345,-310,-358,313,-325,298,226,97,296,-330,265,-330,-330,-313,330,-320,244,270,
    205,-328,-313,-297,-342,297,322,-372,-348,382,-350,-246,-342,-294,-228,-144,238,262,212,-306,
    -324,290,-195,151,-306,273,127,-226,-303,52,212,247,265,-279,-324,-282,328,-250,-298,361,
    349,-342,358,328,-306,346,361,-342,-306,-315,-360,-372,361,367,-375,-358,325
];

// [x, y] pairs at 3x, crop one starts at (0,490), crop two at (410,490)
const volLines = {
    'line-green': [[229,355,345,350,400,335,480,330,510,320,600,320,700,322,780,320,850,320,900,305,980,313,1060,315,1110,300,1160,292,1228,290],
        [30,285,80,295,130,313,200,313,250,290,300,290,350,292,420,285,490,278,550,258,590,238,640,232,700,240,760,250,830,255,890,277,940,280,970,296,1010,298,1060,322,1120,330,1185,340]],
    'line-purple': [[229,342,300,345,345,347,400,328,460,315,510,295,570,287,620,310,680,320,730,342,800,342,850,332,890,297,915,295,960,283,1030,280,1100,285,1150,300,1228,295],
        [50,297,100,320,140,335,200,330,240,310,300,290,340,262,390,265,440,235,480,255,520,240,550,248,590,212,620,208,670,230,710,232,730,252,770,255,800,285,860,310,910,320,950,332,1000,340,1100,340,1150,352,1185,352]],
    'line-yellow': [[229,345,300,345,345,345,375,320,410,297,455,280,490,295,505,280,530,285,570,290,600,310,640,350,720,350,745,340,800,340,850,325,880,260,900,250,960,245,985,265,1005,308,1070,320,1100,300,1140,275,1190,270,1228,290],
        [0,315,50,317,100,340,130,350,165,340,210,320,240,265,280,250,325,218,345,240,365,268,390,280,430,255,470,250,500,212,530,218,550,245,575,195,595,183,615,212,660,212,685,268,730,297,790,298,840,320,880,345,920,337,960,340,1010,335,1090,340,1150,368,1185,358]]
};

// indicator bars: [index, top y, filled red?]
const signalBars = [
    [25,745.7],[26,721],[27,692.3],[28,735.3,true],[29,756.7],[30,767.3],[31,772.3],[32,775.3],[33,776.3],
    [44,753.3],[45,765,true],[46,771],
    [54,738.3],[55,693.3],[56,645.3],[57,711,true],[58,744.3],[59,761.3],[60,769.3],[61,773.3],
    [90,744.3],[91,718.3],[92,748,true],[93,763.3],[94,770.3]
];

const trendLine = [12,148,30,130,42,155,90,150,105,130,125,148,165,160,180,230,200,345,220,355,232,420,240,490,252,520,275,605,290,598,300,605,345,575,365,595,395,670,415,705,425,703,435,640,445,650,465,590];
const trendCyan = [42,175,112,158,122,158,172,165,180,215,190,225,200,225,230,190,238,248,250,190,260,205,270,180,278,165,358,165,367,165,378,170,387,175,397,187,405,165,415,178,445,165];
const trendRed = [435,85,455,115,467,120,295,140,320,140,345,140,170,140];

function el(name, attrs) {
    const node = document.createElementNS(SVG_NS, name);
    for (const key in attrs) {
        node.setAttribute(key, attrs[key]);
    }
    return node;
}

function pairs(list) {
    const out = [];
    for (let i = 0; i < list.length; i += 2) {
        out.push(list[i] + ',' + list[i + 1]);
    }
    return out.join(' ');
}

function drawCandles() {
    const group = document.getElementById('candles');
    const cls = { u: 'cd cd-up', d: 'cd cd-dn', l: 'cd cd-lim', f: 'cd cd-flat' };
    candles.forEach((c, i) => {
        const cx = Math.round(barX(i)) + 0.5;
        const [type, top, bottom, high, low] = c;
        const g = el('g', { class: cls[type] });
        g.appendChild(el('line', { x1: cx, x2: cx, y1: high, y2: low }));
        if (top === bottom) {
            g.appendChild(el('line', { x1: cx - 3, x2: cx + 3, y1: top + 0.5, y2: top + 0.5 }));
        } else {
            g.appendChild(el('rect', { x: cx - 2.5, y: top + 0.5, width: 5, height: bottom - top }));
        }
        group.appendChild(g);
    });
}

function drawLines() {
    const group = document.getElementById('ma-lines');
    for (const name in maLines) {
        group.appendChild(el('polyline', { class: name, points: pairs(maLines[name]) }));
    }
}

function drawVolume() {
    const group = document.getElementById('volume');
    const base = 627;
    volTops.forEach((raw, i) => {
        const x = Math.round(barX(i));
        const top = Math.round(490 + Math.abs(raw) / 3);
        if (raw < 0) {
            group.appendChild(el('rect', { class: 'vol-dn', x: x - 2, y: top, width: 6, height: base - top }));
        } else {
            group.appendChild(el('rect', { class: 'vol-up', x: x - 1.5, y: top + 0.5, width: 5, height: base - top }));
        }
    });
    for (const name in volLines) {
        const pts = [];
        const [a, b] = volLines[name];
        for (let i = 0; i < a.length; i += 2) pts.push(a[i] / 3, 490 + a[i + 1] / 3);
        for (let i = 0; i < b.length; i += 2) pts.push(410 + b[i] / 3, 490 + b[i + 1] / 3);
        group.appendChild(el('polyline', { class: name, points: pairs(pts) }));
    }
}

function drawSignal() {
    const group = document.getElementById('signal');
    const base = 777;
    signalBars.forEach(([i, top, red]) => {
        const x = Math.round(barX(i));
        const y = Math.round(top);
        if (red) {
            group.appendChild(el('rect', { class: 'sig-red', x: x - 2, y, width: 6, height: base - y }));
        } else {
            group.appendChild(el('rect', { class: 'sig-bar', x: x - 1.5, y: y + 0.5, width: 5, height: base - y }));
        }
    });
    group.appendChild(el('line', { class: 'sig-base', x1: 74, x2: 817, y1: 777.5, y2: 777.5 }));
}

// trend panel, coordinates read at 3x from (815,100)
function drawTrend() {
    const page = list => list.map((v, i) => (i % 2 ? 100 + v / 3 : 815 + v / 3));
    document.getElementById('trend-line').setAttribute('points', pairs(page(trendLine)));
    const bars = document.getElementById('trend-bars');
    const zero = 150;
    const add = (list, color) => {
        const pts = page(list);
        for (let i = 0; i < pts.length; i += 2) {
            const x = Math.round(pts[i]) + 0.5;
            bars.appendChild(el('line', { x1: x, x2: x, y1: zero, y2: pts[i + 1], stroke: color }));
        }
    };
    add(trendCyan, '#90e0e0');
    add(trendRed, '#c86860');
}

drawCandles();
drawLines();
drawVolume();
drawSignal();
drawTrend();
```
